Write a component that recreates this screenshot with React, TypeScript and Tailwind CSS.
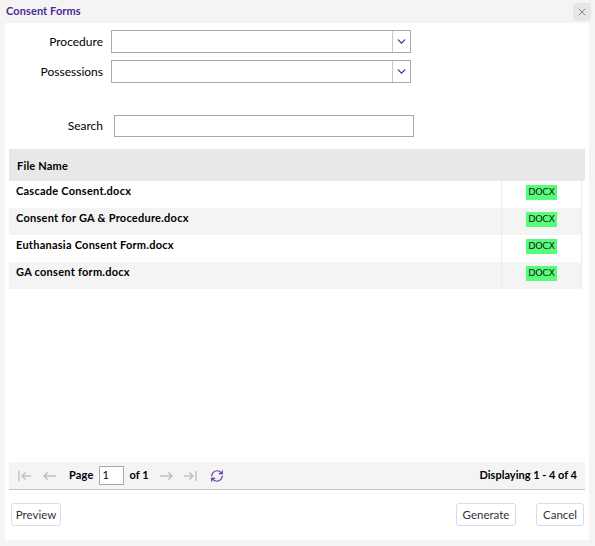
import React from 'react';
import { X, ChevronDown, RefreshCw } from 'lucide-react';

const files = [
  'Cascade Consent.docx',
  'Consent for GA & Procedure.docx',
  'Euthanasia Consent Form.docx',
  'GA consent form.docx',
];

const font = { fontFamily: 'Lato, "Open Sans", sans-serif' };

const SelectBox: React.FC = () => (
  <div className="flex h-[23px] w-[300px] border border-[#a9a9a9] bg-white">
    <div className="flex-1" />
    <div className="flex w-[18px] items-center justify-center border-l border-[#c8c8c8]">
      <ChevronDown size={13} strokeWidth={2.5} className="text-[#4d2a96]" />
    </div>
  </div>
);

// arrows for the pager
const PagerArrow: React.FC<{ dir: 'left' | 'right'; bar?: boolean }> = ({ dir, bar }) => (
  <svg width="14" height="12" viewBox="0 0 14 12" fill="none" stroke="#b5b5b5" strokeWidth="1.2">
    {dir === 'left' ? (
      <>
        {bar && <line x1="1" y1="1" x2="1" y2="11" />}
        <line x1={bar ? 4 : 1} y1="6" x2="13" y2="6" />
        <polyline points={bar ? '7.5,2.5 4,6 7.5,9.5' : '4.5,2.5 1,6 4.5,9.5'} />
      </>
    ) : (
      <>
        {bar && <line x1="13" y1="1" x2="13" y2="11" />}
        <line x1="1" y1="6" x2={bar ? 10 : 13} y2="6" />
        <polyline points={bar ? '6.5,2.5 10,6 6.5,9.5' : '9.5,2.5 13,6 9.5,9.5'} />
      </>
    )}
  </svg>
);

const btn =
  'flex h-[23px] items-center justify-center rounded-[3px] border border-[#dcd8ec] bg-white text-[11.5px] text-[#333]';

export default function App() {
  return (
    <div className="flex h-[546px] w-[595px] flex-col bg-[#f4f4f4] text-[11px] text-black" style={font}>
      {/* title bar */}
      <div className="flex h-[23px] items-center justify-between pl-[6px] pr-[4px]">
        <span className="text-[11px] font-bold tracking-[0.1px] text-[#4d2a96]">Consent Forms</span>
        <div className="flex h-[18px] w-[18px] items-center justify-center rounded-[3px] bg-[#e6e6e6]">
          <X size={12} strokeWidth={1.3} className="text-[#555]" />
        </div>
      </div>

      <div className="mb-[6px] ml-[5px] mr-[6px] flex flex-1 flex-col bg-white">
        {/* form */}
        <div className="flex flex-col pt-[7px]">
          <div className="flex items-center">
            <label className="w-[98px] text-right text-[12px]">Procedure</label>
            <div className="ml-[8px]">
              <SelectBox />
            </div>
          </div>
          <div className="mt-[7px] flex items-center">
            <label className="w-[98px] text-right text-[12px]">Possessions</label>
            <div className="ml-[8px]">
              <SelectBox />
            </div>
          </div>
          <div className="mt-[32px] flex items-center">
            <label className="w-[98px] text-right text-[12px]">Search</label>
            <div className="ml-[11px] h-[22px] w-[300px] border border-[#a9a9a9]" />
          </div>
        </div>

        {/* grid */}
        <div className="mx-[4px] mt-[12px]">
          <div className="flex h-[32px] items-center bg-[#e8e8e8] pl-[8px] pt-[3px] font-bold tracking-[0.2px]">
            File Name
          </div>
          {files.map((name, i) => (
            <div
              key={name}
              className={`mr-[3px] flex h-[27px] border-r border-[#ebebeb] ${i % 2 === 1 ? 'bg-[#f4f4f4]' : 'bg-white'}`}
            >
              <div className="flex flex-1 items-start pl-[7px] pt-[2px] font-bold tracking-[0.25px]">{name}</div>
              <div className="flex w-[80px] items-start justify-center border-l border-[#ebebeb] pt-[4px]">
                <span
                  className="flex h-[15px] items-center bg-[#57fc79] px-[2px] text-[9.5px] text-[#1a1a1a]"
                  style={{ fontFamily: '"DejaVu Sans", sans-serif', letterSpacing: '-0.4px' }}
                >
                  DOCX
                </span>
              </div>
            </div>
          ))}
        </div>

        <div className="flex-1" />

        {/* pager */}
        <div className="mx-[4px] flex h-[28px] items-center border-b border-[#c4c4c4] bg-[#f4f4f4] pr-[8px]">
          <div className="ml-[9px] flex items-center">
            <PagerArrow dir="left" bar />
          </div>
          <div className="ml-[11px] flex items-center">
            <PagerArrow dir="left" />
          </div>
          <span className="ml-[12px] font-bold tracking-[0.2px]">Page</span>
          <div className="ml-[5px] flex h-[19px] w-[25px] items-center border border-[#a9a9a9] bg-white pl-[3px]">1</div>
          <span className="ml-[6px] font-bold">of 1</span>
          <div className="ml-[10px] flex items-center">
            <PagerArrow dir="right" />
          </div>
          <div className="ml-[10px] flex items-center">
            <PagerArrow dir="right" bar />
          </div>
          <RefreshCw size={14} strokeWidth={2} className="ml-[13px] text-[#5b35b0]" />
          <span className="ml-auto font-bold">Displaying 1 - 4 of 4</span>
        </div>

        {/* buttons */}
        <div className="flex items-center pl-[6px] pr-[5px] pt-[13px] pb-[14px]">
          <button className={`${btn} w-[50px]`}>Preview</button>
          <div className="flex-1" />
          <button className={`${btn} w-[60px]`}>Generate</button>
          <button className={`${btn} ml-[20px] w-[48px]`}>Cancel</button>
        </div>
      </div>
    </div>
  );
}
